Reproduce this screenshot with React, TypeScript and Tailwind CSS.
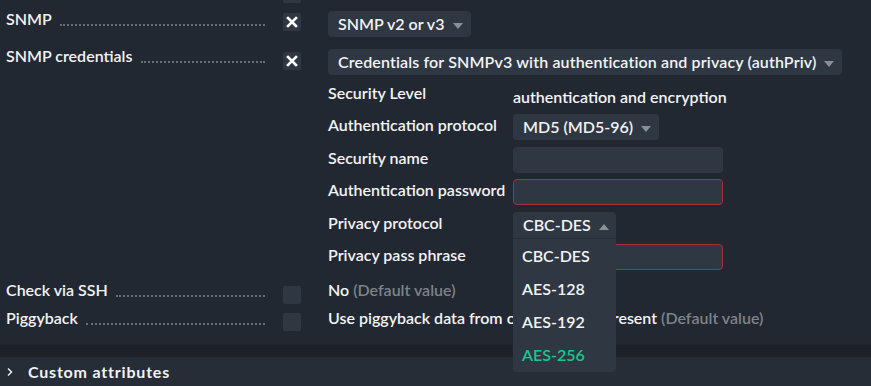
const font = { fontFamily: "Lato, 'Open Sans', sans-serif" };

function Caret({ up = false }: { up?: boolean }) {
  return (
    <svg width="10" height="6" viewBox="0 0 10 6" className="ml-[8px] mt-[3px]">
      {up ? <path d="M0 6 L5 0 L10 6 Z" fill="#8a8f96" /> : <path d="M0 0 L10 0 L5 6 Z" fill="#8a8f96" />}
    </svg>
  );
}

function Check({ on }: { on: boolean }) {
  return (
    <div className="flex h-[18px] w-[18px] items-center justify-center rounded-[2px] bg-[#2f3743]">
      {on && (
        <svg width="12" height="12" viewBox="0 0 12 12">
          <path d="M2 2 L10 10 M10 2 L2 10" stroke="#fff" strokeWidth="2.6" strokeLinecap="square" />
        </svg>
      )}
    </div>
  );
}

function Label({ text }: { text: string }) {
  return (
    <div className="flex h-[20px] w-[265px] items-end pl-[6px]">
      <span className="whitespace-nowrap">{text}</span>
      <span className="mb-[3px] ml-[8px] flex-1 border-b-2 border-dotted border-[#686e76]" />
    </div>
  );
}

function Select({ text, wide }: { text: string; wide?: boolean }) {
  return (
    <div className="flex h-[26px] items-center rounded-[4px] bg-[#2f3743] pl-[10px] pr-[8px]">
      <span className={wide ? "tracking-[0.14px]" : ""}>{text}</span>
      <Caret />
    </div>
  );
}

function Input({ error }: { error?: boolean }) {
  return (
    <div
      className={`h-[26px] w-[210px] rounded-[4px] bg-[#2f3743] ${error ? "border border-[#a8313d]" : ""}`}
    />
  );
}

function SubRow({ label, children, mt }: { label: string; children: React.ReactNode; mt: string }) {
  return (
    <div className={`flex items-start ${mt}`}>
      <div className="mt-[1px] w-[185px] leading-[20px]">{label}</div>
      {children}
    </div>
  );
}

export default function App() {
  return (
    <div
      className="h-[386px] w-[871px] overflow-hidden bg-[#222831] text-[16px] font-semibold leading-[20px] text-[#f2f3f4]"
      style={font}
    >
      <div className="relative flex h-[345px] flex-col">
        <div className="absolute left-[283px] top-[-15px] h-[18px] w-[18px] rounded-[2px] bg-[#2f3743]" />

        <div className="mt-[9px] flex items-start">
          <Label text="SNMP" />
          <div className="ml-[18px] mt-[4px]"><Check on /></div>
          <div className="ml-[27px] mt-[2px]"><Select text="SNMP v2 or v3" /></div>
        </div>

        <div className="mt-[9px] flex items-start">
          <Label text="SNMP credentials" />
          <div className="ml-[18px] mt-[6px]"><Check on /></div>
          <div className="ml-[27px] mt-[3px]">
            <Select wide text="Credentials for SNMPv3 with authentication and privacy (authPriv)" />
          </div>
        </div>

        <div className="ml-[328px] mt-[8px] flex flex-col">
          <div className="flex items-start">
            <div className="w-[185px]">Security Level</div>
            <span className="mt-[4px]">authentication and encryption</span>
          </div>
          <SubRow label="Authentication protocol" mt="mt-[7px]">
            <Select text="MD5 (MD5-96)" />
          </SubRow>
          <SubRow label="Security name" mt="mt-[7px]">
            <Input />
          </SubRow>
          <SubRow label="Authentication password" mt="mt-[6px]">
            <Input error />
          </SubRow>
          <SubRow label="Privacy protocol" mt="mt-[7px]">
            <div className="relative">
              <div className="flex h-[26px] w-[103px] items-center rounded-t-[4px] bg-[#2f3743] pl-[10px]">
                <span>CBC-DES</span>
                <Caret up />
              </div>
              <div className="absolute left-0 top-[26px] z-10 flex w-[103px] flex-col rounded-b-[4px] border-t border-[#262d36] bg-[#2f3743] pb-[1px]">
                <div className="flex h-[33px] items-center pl-[9px]">CBC-DES</div>
                <div className="flex h-[33px] items-center pl-[9px]">AES-128</div>
                <div className="flex h-[33px] items-center pl-[9px]">AES-192</div>
                <div className="flex h-[33px] items-center pl-[9px] text-[#15c98e]">AES-256</div>
              </div>
            </div>
          </SubRow>
          <SubRow label="Privacy pass phrase" mt="mt-[6px]">
            <Input error />
          </SubRow>
        </div>

        <div className="mt-[10px] flex items-start">
          <Label text="Check via SSH" />
          <div className="ml-[18px] mt-[6px]"><Check on={false} /></div>
          <div className="ml-[27px]">
            No <span className="text-[#7d838b]">(Default value)</span>
          </div>
        </div>

        <div className="mt-[4px] flex items-start">
          <Label text="Piggyback" />
          <div className="ml-[18px] mt-[5px]"><Check on={false} /></div>
          <div className="ml-[27px]">
            Use piggyback data from other hosts if present <span className="text-[#7d838b]">(Default value)</span>
          </div>
        </div>
      </div>

      <div className="h-[12px] bg-[#1d2229]" />
      <div className="flex h-[29px] items-center bg-[#262d37]">
        <svg width="8" height="10" viewBox="0 0 8 10" className="ml-[6px]">
          <path d="M2 1.5 L5.5 5 L2 8.5" stroke="#e8e9eb" strokeWidth="1.5" fill="none" />
        </svg>
        <span className="ml-[14px] font-bold tracking-[0.8px]">Custom attributes</span>
      </div>
    </div>
  );
}
